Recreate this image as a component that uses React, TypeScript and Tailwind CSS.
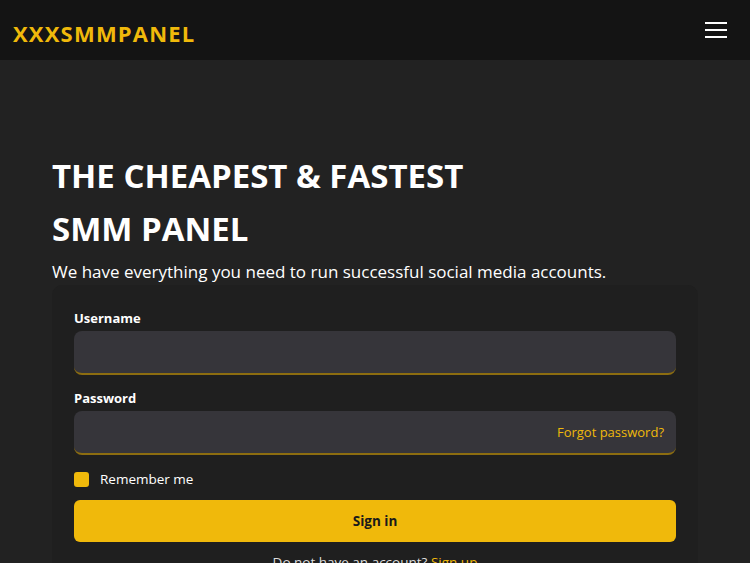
export default function App() {
  return (
    <div className="min-h-[563px] bg-[#222222] font-['Open_Sans',sans-serif] text-white">
      {/* Navbar */}
      <header className="flex h-[60px] items-center justify-between bg-[#141414] pl-[13px] pr-[23px]">
        <a href="#" className="mt-[6px] text-[22px] font-bold tracking-[1.2px] text-[#f0b90b]">
          XXXSMMPANEL
        </a>
        <button aria-label="Menu" className="flex w-[22px] flex-col gap-[5px]">
          <span className="block h-[2px] w-full bg-white" />
          <span className="block h-[2px] w-full bg-white" />
          <span className="block h-[2px] w-full bg-white" />
        </button>
      </header>

      {/* Hero */}
      <section className="px-[52px] pt-[89px]">
        <h1 className="text-[33px] font-bold leading-[53px]">
          THE CHEAPEST &amp; FASTEST
          <br />
          SMM PANEL
        </h1>
        <p className="mt-[4px] text-[17px] leading-[26px]">
          We have everything you need to run successful social media accounts.
        </p>

        {/* Login card */}
        <div className="w-[646px] rounded-t-[10px] bg-[#1f1f1f] px-[22px] pb-6 pt-[23px]">
          <label className="mb-[3px] block text-[13px] font-bold leading-[20px]">Username</label>
          <div className="h-[44px] rounded-[8px] border-b-2 border-[#8c6d10] bg-[#36353a]" />

          <label className="mb-[3px] mt-[13px] block text-[13px] font-bold leading-[20px]">Password</label>
          <div className="flex h-[44px] items-center justify-end rounded-[8px] border-b-2 border-[#8c6d10] bg-[#36353a] pr-3 pt-[2px]">
            <a href="#" className="text-[13px] text-[#f0b90b]">
              Forgot password?
            </a>
          </div>

          <div className="mt-4 flex h-[16px] items-center gap-[11px]">
            <span className="block h-[15px] w-[15px] rounded-[3px] bg-[#f0b90b]" />
            <span className="text-[13.5px] leading-[16px]">Remember me</span>
          </div>

          <button className="mt-[13px] h-[42px] w-full rounded-[6px] bg-[#f0b90b] text-[13.5px] font-bold text-[#1a1a1a]">
            Sign in
          </button>

          <p className="mt-[10px] text-center text-[13.5px] leading-[20px] text-[#dddddd]">
            Do not have an account?{' '}
            <a href="#" className="text-[#f0b90b]">
              Sign up
            </a>
          </p>
        </div>
      </section>
    </div>
  );
}
